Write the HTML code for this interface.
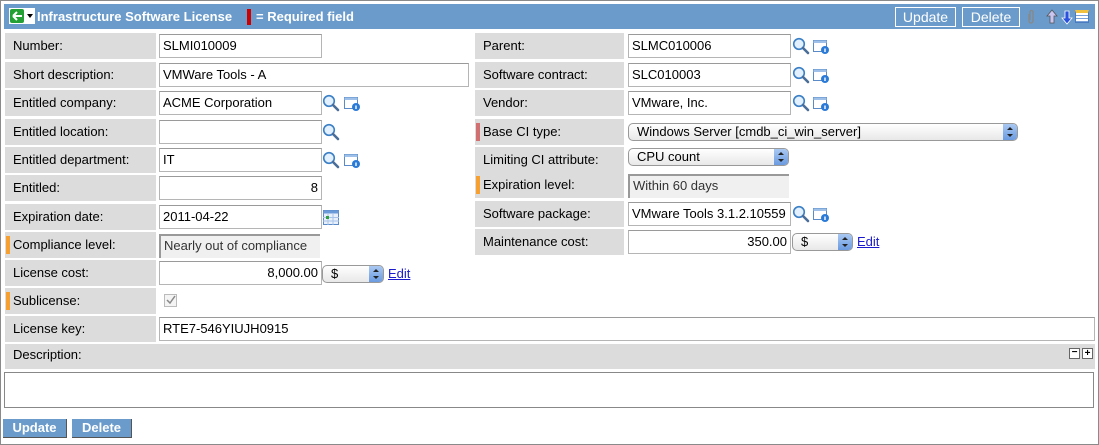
<!DOCTYPE html><html><head><style>
body{margin:0;width:1099px;height:445px;overflow:hidden;background:#fff;font-family:"Liberation Sans",Arial,sans-serif;font-size:13px;color:#000;position:relative}
.a{position:absolute}
.lb{position:absolute;background:#dcdcdc;height:26px;line-height:26px;padding-left:8px;box-sizing:border-box}
.bar{position:absolute;left:0;top:4px;width:4px;height:18px}
.in{position:absolute;height:24px;box-sizing:border-box;border:1px solid #b5b5b5;border-top-color:#9a9a9a;background:#fff;line-height:22px;padding:0 3px;white-space:nowrap;overflow:hidden}
.ro{background:#f0f0f0;border:none;border-top:2px solid #999;border-left:2px solid #999;line-height:20px;color:#333}
.sel{position:absolute;height:18px;box-sizing:border-box;border:1px solid #999;border-radius:5px;background:linear-gradient(#fff,#e8e8e8);line-height:16px;padding-left:8px}
.sel b{position:absolute;right:0;top:0;width:14px;height:16px;border-radius:0 4px 4px 0;background:linear-gradient(#a9c8f2,#6b9be0);}
.sel b:before{content:"";position:absolute;left:4px;top:3px;border:3px solid transparent;border-bottom:3px solid #222;border-top:0}
.sel b:after{content:"";position:absolute;left:4px;top:10px;border:3px solid transparent;border-top:3px solid #222;border-bottom:0}
.ed{position:absolute;color:#1a1acc;text-decoration:underline}
.btn{position:absolute;border:1px solid #fff;color:#fff;height:20px;line-height:18px;box-sizing:border-box;text-align:center;font-size:14px}
</style></head><body>
<div class="a" style="left:0;top:0;width:1097px;height:443px;border:1px solid #8a8a8a"></div>
<!-- header -->
<div class="a" style="left:4px;top:4px;width:1091px;height:25px;background:#6a9bcb"></div>
<div class="a" style="left:9px;top:8px;width:16px;height:16px;background:#fff"></div>
<div class="a" style="left:10px;top:9px;width:14px;height:14px;background:#25a035;border-radius:2px"></div>
<svg class="a" style="left:10px;top:9px" width="14" height="14"><path d="M3 7 L7 3 M3 7 L7 11 M3 7 H12" stroke="#fff" stroke-width="2" fill="none"/></svg>
<div class="a" style="left:25px;top:8px;width:10px;height:16px;background:#fff"></div>
<div class="a" style="left:27px;top:14px;border:3px solid transparent;border-top:4px solid #000;border-bottom:0"></div>
<div class="a" style="left:37px;top:9px;color:#fff;font-weight:bold;font-size:13px">Infrastructure Software License</div>
<div class="a" style="left:247px;top:9px;width:4px;height:16px;background:#c00"></div>
<div class="a" style="left:256px;top:9px;color:#fff;font-weight:bold;font-size:13px">= Required field</div>
<div class="btn" style="left:895px;top:7px;width:61px">Update</div>
<div class="btn" style="left:962px;top:7px;width:58px">Delete</div>
<svg class="a" style="left:1026px;top:9px" width="10" height="16"><path d="M3 5 V12 a2 2 0 0 0 4 0 V3 a1.5 1.5 0 0 0 -3 0 V11" stroke="#888" stroke-width="1.3" fill="none"/></svg>
<svg class="a" style="left:1046px;top:9px" width="12" height="16"><path d="M6 1 L11 7 H8 V14 H4 V7 H1 Z" fill="#c9c4f0" stroke="#555" stroke-width=".8"/></svg>
<svg class="a" style="left:1061px;top:9px" width="12" height="16"><path d="M6 15 L11 9 H8 V2 H4 V9 H1 Z" fill="#2a50e0" stroke="#fff" stroke-width=".8"/></svg>
<div class="a" style="left:1075px;top:10px;width:14px;height:13px;border:1px solid #4a7ac0;background:repeating-linear-gradient(#fff 0 2px,#7aa0d8 2px 3px);box-sizing:border-box;border-top:3px solid #f0c040"></div>

<!-- left labels -->
<div class="lb" style="left:5px;top:33px;width:151px">Number:</div>
<div class="lb" style="left:5px;top:62px;width:151px">Short description:</div>
<div class="lb" style="left:5px;top:90px;width:151px">Entitled company:</div>
<div class="lb" style="left:5px;top:119px;width:151px">Entitled location:</div>
<div class="lb" style="left:5px;top:147px;width:151px">Entitled department:</div>
<div class="lb" style="left:5px;top:175px;width:151px">Entitled:</div>
<div class="lb" style="left:5px;top:204px;width:151px">Expiration date:</div>
<div class="lb" style="left:5px;top:232px;width:151px"><span class="bar" style="left:1px;background:#f5a030"></span>Compliance level:</div>
<div class="lb" style="left:5px;top:260px;width:151px">License cost:</div>
<div class="lb" style="left:5px;top:288px;width:151px"><span class="bar" style="left:1px;background:#f5a030"></span>Sublicense:</div>
<div class="lb" style="left:5px;top:316px;width:151px">License key:</div>

<div class="in" style="left:159px;top:34px;width:163px">SLMI010009</div>
<div class="in" style="left:159px;top:63px;width:310px">VMWare Tools - A</div>
<div class="in" style="left:159px;top:91px;width:163px">ACME Corporation</div>
<div class="in" style="left:159px;top:120px;width:163px"></div>
<div class="in" style="left:159px;top:148px;width:163px">IT</div>
<div class="in" style="left:159px;top:176px;width:163px;text-align:right">8</div>
<div class="in" style="left:159px;top:205px;width:163px">2011-04-22</div>
<div class="in ro" style="left:159px;top:234px;width:161px">Nearly out of compliance</div>
<div class="in" style="left:159px;top:261px;width:163px;text-align:right">8,000.00</div>
<div class="sel" style="left:322px;top:265px;width:62px">$<b></b></div>
<div class="ed" style="left:388px;top:266px">Edit</div>
<svg class="a" style="left:164px;top:294px" width="13" height="13"><rect x=".5" y=".5" width="12" height="12" fill="#f4f4f4" stroke="#bbb"/><path d="M3 6 L6 9 L11 2" stroke="#888" stroke-width="1.5" fill="none"/></svg>
<div class="in" style="left:159px;top:317px;width:936px">RTE7-546YIUJH0915</div>

<!-- right labels -->
<div class="lb" style="left:475px;top:33px;width:149px">Parent:</div>
<div class="lb" style="left:475px;top:62px;width:149px">Software contract:</div>
<div class="lb" style="left:475px;top:90px;width:149px">Vendor:</div>
<div class="lb" style="left:475px;top:119px;width:149px"><span class="bar" style="left:1px;background:#d07070"></span>Base CI type:</div>
<div class="lb" style="left:475px;top:147px;width:149px">Limiting CI attribute:</div>
<div class="lb" style="left:475px;top:172px;width:149px"><span class="bar" style="left:1px;background:#f5a030"></span>Expiration level:</div>
<div class="lb" style="left:475px;top:201px;width:149px">Software package:</div>
<div class="lb" style="left:475px;top:229px;width:149px">Maintenance cost:</div>

<div class="in" style="left:628px;top:34px;width:163px">SLMC010006</div>
<div class="in" style="left:628px;top:63px;width:163px">SLC010003</div>
<div class="in" style="left:628px;top:91px;width:163px">VMware, Inc.</div>
<div class="sel" style="left:628px;top:123px;width:390px">Windows Server [cmdb_ci_win_server]<b></b></div>
<div class="sel" style="left:628px;top:148px;width:161px">CPU count<b></b></div>
<div class="in ro" style="left:628px;top:174px;width:161px">Within 60 days</div>
<div class="in" style="left:628px;top:202px;width:163px">VMware Tools 3.1.2.10559</div>
<div class="in" style="left:628px;top:230px;width:163px;text-align:right">350.00</div>
<div class="sel" style="left:792px;top:233px;width:61px">$<b></b></div>
<div class="ed" style="left:857px;top:234px">Edit</div>

<!-- icons -->
<svg width="0" height="0" style="position:absolute"><defs>
<g id="m"><circle cx="7" cy="7" r="5.3" fill="#e2f0ff" stroke="#3b7fc4" stroke-width="1.6"/><line x1="11" y1="11" x2="16" y2="16" stroke="#4a6e9a" stroke-width="2.6" stroke-linecap="round"/></g>
<g id="i"><rect x="1.5" y="2.5" width="13" height="11" fill="#fff" stroke="#5a8ac8"/><rect x="1.5" y="2.5" width="13" height="2.5" fill="#9fc0e8"/><circle cx="13" cy="12" r="4" fill="#2a7bd8"/><rect x="12.3" y="10.5" width="1.4" height="3.5" fill="#fff"/></g>
</defs></svg>
<svg class="a" style="left:322px;top:94px" width="18" height="18"><use href="#m"/></svg>
<svg class="a" style="left:343px;top:95px" width="18" height="17"><use href="#i"/></svg>
<svg class="a" style="left:322px;top:123px" width="18" height="18"><use href="#m"/></svg>
<svg class="a" style="left:322px;top:151px" width="18" height="18"><use href="#m"/></svg>
<svg class="a" style="left:343px;top:152px" width="18" height="17"><use href="#i"/></svg>
<svg class="a" style="left:323px;top:210px" width="16" height="16"><rect x=".5" y=".5" width="15" height="14" fill="#e8f0fb" stroke="#5a8ac8"/><rect x=".5" y=".5" width="15" height="3" fill="#6a9ad8"/><path d="M0 7.5H16M0 11H16M5 3V15M10 3V15" stroke="#a8c4ea"/><rect x="3" y="6" width="3" height="3" fill="#30a040"/></svg>
<svg class="a" style="left:792px;top:37px" width="18" height="18"><use href="#m"/></svg>
<svg class="a" style="left:812px;top:38px" width="18" height="17"><use href="#i"/></svg>
<svg class="a" style="left:792px;top:66px" width="18" height="18"><use href="#m"/></svg>
<svg class="a" style="left:812px;top:67px" width="18" height="17"><use href="#i"/></svg>
<svg class="a" style="left:792px;top:94px" width="18" height="18"><use href="#m"/></svg>
<svg class="a" style="left:812px;top:95px" width="18" height="17"><use href="#i"/></svg>
<svg class="a" style="left:792px;top:205px" width="18" height="18"><use href="#m"/></svg>
<svg class="a" style="left:812px;top:206px" width="18" height="17"><use href="#i"/></svg>

<!-- description -->
<div class="lb" style="left:5px;top:344px;width:1090px;height:25px;line-height:22px">Description:</div>
<div class="a" style="left:1069px;top:348px;width:9px;height:9px;border:1px solid #666;background:#fff;font-size:10px;line-height:8px;text-align:center;font-weight:bold">−</div>
<div class="a" style="left:1082px;top:348px;width:9px;height:9px;border:1px solid #666;background:#fff;font-size:10px;line-height:9px;text-align:center;font-weight:bold">+</div>
<div class="a" style="left:4px;top:372px;width:1090px;height:36px;border:1px solid #888;box-sizing:border-box"></div>

<div class="a" style="left:3px;top:419px;width:64px;height:19px;background:#6a9bcb;border-right:1px solid #555;border-bottom:1px solid #555;box-sizing:border-box;color:#fff;font-weight:bold;text-align:center;line-height:18px">Update</div>
<div class="a" style="left:72px;top:419px;width:60px;height:19px;background:#6a9bcb;border-right:1px solid #555;border-bottom:1px solid #555;box-sizing:border-box;color:#fff;font-weight:bold;text-align:center;line-height:18px">Delete</div>
</body></html>
